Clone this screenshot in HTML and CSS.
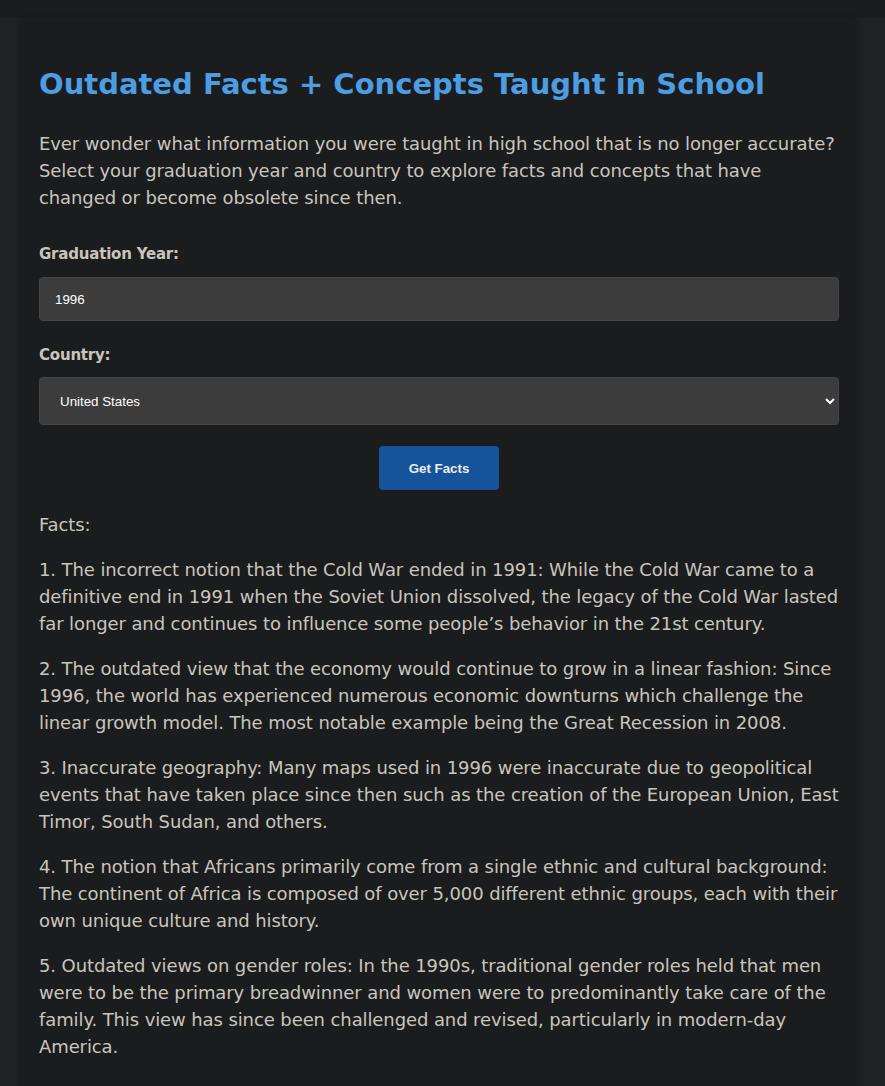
FILE: index.html
```html
<!DOCTYPE html>
<html lang="en">
<head>
<meta charset="utf-8">
<title>Outdated Facts + Concepts Taught in School</title>
<link rel="stylesheet" href="styles.css">
</head>
<body>
<div class="page">
  <main class="container">
    <h1 class="title">Outdated Facts + Concepts Taught in School</h1>
    <p class="intro">Ever wonder what information you were taught in high school that is no longer accurate? Select your graduation year and country to explore facts and concepts that have changed or become obsolete since then.</p>
    <form class="form">
      <label class="label" for="year">Graduation Year:</label>
      <input class="field" id="year" type="text" value="1996">
      <label class="label" for="country">Country:</label>
      <select class="field select" id="country">
        <option>United States</option>
      </select>
      <div class="actions"><button class="btn" type="button">Get Facts</button></div>
    </form>
    <section class="facts">
      <p class="facts-head">Facts:</p>
      <p class="fact">1. The incorrect notion that the Cold War ended in 1991: While the Cold War came to a definitive end in 1991 when the Soviet Union dissolved, the legacy of the Cold War lasted far longer and continues to influence some people’s behavior in the 21st century.</p>
      <p class="fact">2. The outdated view that the economy would continue to grow in a linear fashion: Since 1996, the world has experienced numerous economic downturns which challenge the linear growth model. The most notable example being the Great Recession in 2008.</p>
      <p class="fact">3. Inaccurate geography: Many maps used in 1996 were inaccurate due to geopolitical events that have taken place since then such as the creation of the European Union, East Timor, South Sudan, and others.</p>
      <p class="fact">4. The notion that Africans primarily come from a single ethnic and cultural background: The continent of Africa is composed of over 5,000 different ethnic groups, each with their own unique culture and history.</p>
      <p class="fact">5. Outdated views on gender roles: In the 1990s, traditional gender roles held that men were to be the primary breadwinner and women were to predominantly take care of the family. This view has since been challenged and revised, particularly in modern-day America.</p>
    </section>
  </main>
</div>
</body>
</html>
```
FILE: styles.css
```css
html, body {
  margin: 0;
  padding: 0;
  background: #1b1c1e;
}
body {
  font-family: "DejaVu Sans", "Liberation Sans", sans-serif;
  color: #c9c5bd;
}
.page {
  margin-top: 18px;
  background: #202124;
  padding-left: 19px;
  min-height: 1068px;
}
.container {
  width: 800px;
  padding: 20px;
  background: #1b1c1e;
  border-radius: 8px 8px 0 0;
  box-shadow: 0 0 4px rgba(0, 0, 0, 0.25);
  min-height: 1040px;
}
.title {
  margin: 28px 0 0;
  font-size: 29px;
  font-weight: 700;
  line-height: 36px;
  color: #4d9de3;
}
.intro {
  margin: 28px 0 0;
  font-size: 18px;
  letter-spacing: -0.1px;
  line-height: 27px;
}
.form {
  display: flex;
  flex-direction: column;
  margin-top: 32px;
}
.label {
  font-size: 15px;
  font-weight: 700;
  letter-spacing: -0.2px;
  line-height: 22px;
}
.field {
  margin-top: 12px;
  box-sizing: border-box;
  width: 100%;
  height: 44px;
  padding: 0 15px;
  background: #3c3c3c;
  border: 1px solid #454545;
  border-radius: 4px;
  color: #ffffff;
  font-family: "Liberation Sans", Arial, sans-serif;
  font-size: 13.33px;
  margin-bottom: 23px;
}
.select {
  height: 48px;
  margin-top: 11px;
  padding: 0 10px 0 16px;
  margin-bottom: 21px;
}
.actions {
  display: flex;
  justify-content: center;
}
.btn {
  width: 120px;
  height: 44px;
  background: #17539b;
  border: none;
  border-radius: 4px;
  color: #ececec;
  font-family: "Liberation Sans", Arial, sans-serif;
  font-size: 13.33px;
  font-weight: 700;
}
.facts {
  margin-top: 21px;
  font-size: 18px;
  letter-spacing: -0.1px;
  line-height: 27px;
}
.facts-head {
  margin: 0 0 18px;
}
.fact {
  margin: 0 0 18px;
}
```
